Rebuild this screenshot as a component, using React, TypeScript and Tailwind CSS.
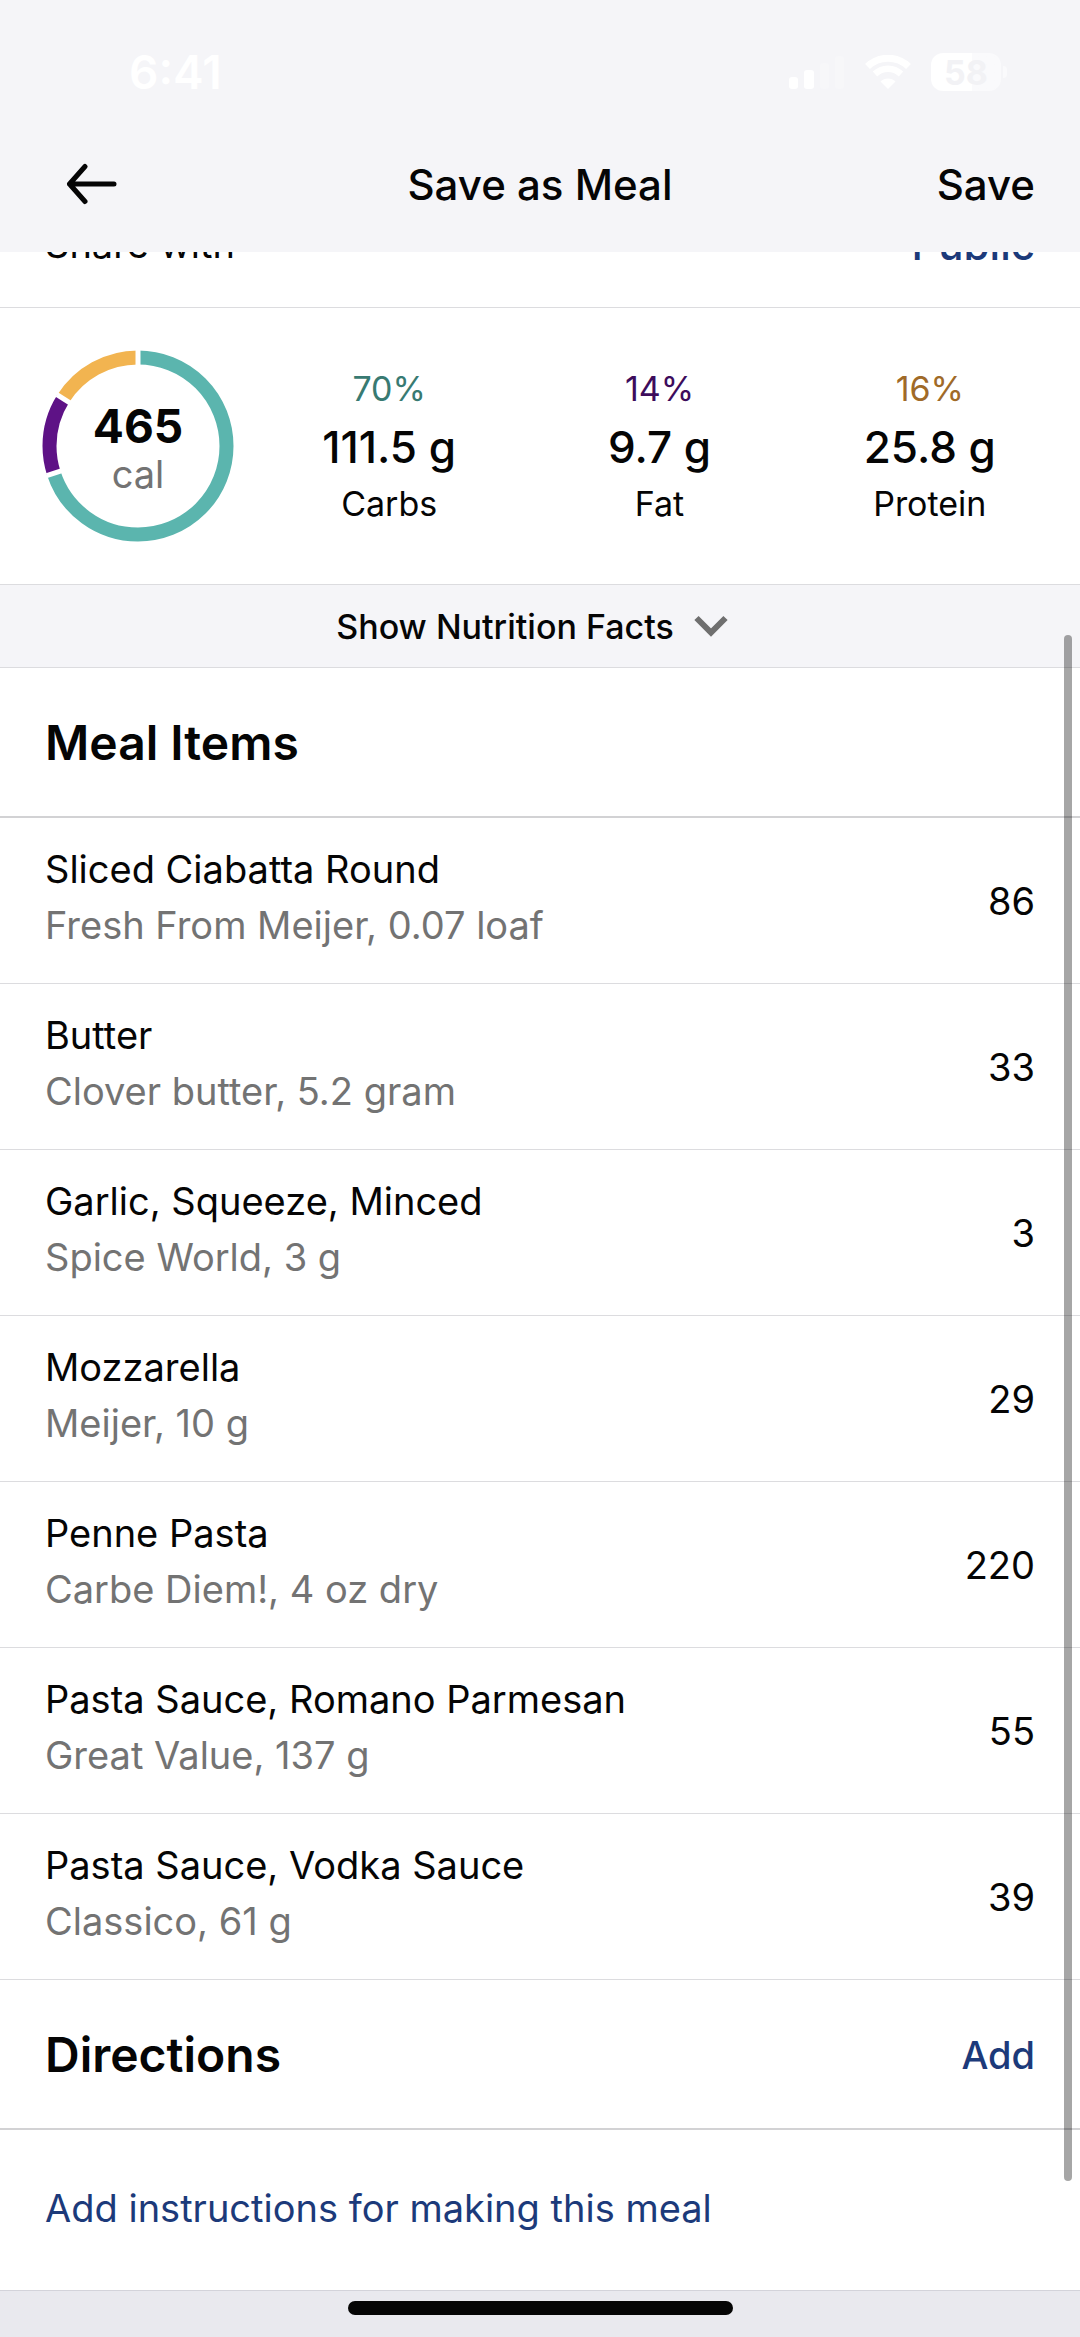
import React from "react";

type Macro = { percent: string; grams: string; label: string; color: string };
type MealItem = { name: string; detail: string; calories: number };

const macros: Macro[] = [
  { percent: "70%", grams: "111.5 g", label: "Carbs", color: "text-[#387a72]" },
  { percent: "14%", grams: "9.7 g", label: "Fat", color: "text-[#3d0c5c]" },
  { percent: "16%", grams: "25.8 g", label: "Protein", color: "text-[#a06a28]" },
];

const items: MealItem[] = [
  { name: "Sliced Ciabatta Round", detail: "Fresh From Meijer, 0.07 loaf", calories: 86 },
  { name: "Butter", detail: "Clover butter, 5.2 gram", calories: 33 },
  { name: "Garlic, Squeeze, Minced", detail: "Spice World, 3 g", calories: 3 },
  { name: "Mozzarella", detail: "Meijer, 10 g", calories: 29 },
  { name: "Penne Pasta", detail: "Carbe Diem!, 4 oz dry", calories: 220 },
  { name: "Pasta Sauce, Romano Parmesan", detail: "Great Value, 137 g", calories: 55 },
  { name: "Pasta Sauce, Vodka Sauce", detail: "Classico, 61 g", calories: 39 },
];

function StatusBar() {
  return (
    <div className="flex h-[116px] items-center justify-between pt-7 pr-[73px] pl-[129px] text-white">
      <span className="text-[46px] font-semibold">6:41</span>
      <div className="flex items-center gap-5">
        <svg width="56" height="34" viewBox="0 0 56 34" fill="currentColor" aria-hidden="true">
          <rect x="0" y="22" width="9" height="12" rx="3" />
          <rect x="15" y="15" width="10" height="19" rx="3" />
          <rect x="31" y="8" width="9" height="26" rx="3" opacity="0.2" />
          <rect x="46" y="1" width="9" height="33" rx="3" opacity="0.2" />
        </svg>
        <svg width="46" height="34" viewBox="0 0 46 34" fill="none" stroke="currentColor" aria-hidden="true">
          <path d="M2.5 11.5C14 0.5 32 0.5 43.5 11.5" strokeWidth="7" />
          <path d="M10 19C17.500 12 28.500 12 36 19" strokeWidth="6.500" />
          <path d="M15.500 26.500C19.500 22.500 26.500 22.500 30.500 26.500L23 34Z" fill="currentColor" stroke="none" />
        </svg>
        <div className="flex items-center gap-0.5">
          <div className="flex h-[38px] w-[70px] items-center justify-center rounded-xl bg-linear-to-r from-white from-58% to-[#fafafc] to-58% text-[34px] font-bold text-[#f2f2f5]">
            58
          </div>
          <div className="h-3 w-1 rounded-r-full bg-[#fafafc]" />
        </div>
      </div>
    </div>
  );
}

function CalorieRing() {
  return (
    <div className="relative flex size-[192px] shrink-0 flex-col items-center justify-center pt-2">
      <svg className="absolute inset-0" viewBox="0 0 192 192" fill="none" strokeWidth="14" aria-hidden="true">
        <g transform="rotate(-90 96 96)">
          <circle cx="96" cy="96" r="88.500" pathLength="100" stroke="#5bb5ae" strokeDasharray="70 30" />
          <circle cx="96" cy="96" r="88.500" pathLength="100" stroke="#5e1286" strokeDasharray="14 86" strokeDashoffset="-70" />
          <circle cx="96" cy="96" r="88.500" pathLength="100" stroke="#f2b450" strokeDasharray="16 84" strokeDashoffset="-84" />
        </g>
        <g stroke="#fff" strokeWidth="5">
          <path d="M96 0V20" />
          <path d="M96 0V20" transform="rotate(252 96 96)" />
          <path d="M96 0V20" transform="rotate(302.400 96 96)" />
        </g>
      </svg>
      <span className="text-[46px] leading-[48px] font-bold">465</span>
      <span className="text-[38px] leading-[48px] text-[#737373]">cal</span>
    </div>
  );
}

export default function App() {
  return (
    <div className="flex min-h-screen flex-col bg-white font-['Inter',sans-serif] text-[#050505]">
      <header className="bg-[#f5f5f8]">
        <StatusBar />
        <nav className="grid h-[136px] grid-cols-[1fr_auto_1fr] items-center px-[45px] text-[42px] font-medium">
          <button type="button" aria-label="Back" className="justify-self-start pl-5">
            <svg
              width="52"
              height="42"
              viewBox="0 0 52 42"
              fill="none"
              stroke="currentColor"
              strokeWidth="5"
              strokeLinecap="round"
              strokeLinejoin="round"
              aria-hidden="true"
            >
              <path d="M20 3.500L4.500 21L20 38.500M4.500 21H49" />
            </svg>
          </button>
          <h1>Save as Meal</h1>
          <button type="button" className="justify-self-end">
            Save
          </button>
        </nav>
      </header>

      <main className="relative flex grow flex-col overflow-hidden">
        <div className="-mt-[71px] flex h-[127px] shrink-0 items-center justify-between border-b border-[#dcdcdf] px-[45px] text-[38px]">
          <span>Share with</span>
          <button type="button" className="text-[42px] font-medium text-[#1c3a7a]">
            Public
          </button>
        </div>

        <section className="flex h-[277px] items-center border-b border-[#dcdcdf] pr-[15px] pl-[42px]">
          <CalorieRing />
          <div className="ml-5 flex grow">
            {macros.map((m) => (
              <div key={m.label} className="flex flex-1 flex-col items-center">
                <span className={`text-[34px] leading-[44px] ${m.color}`}>{m.percent}</span>
                <span className="text-[44px] leading-[72px] font-medium">{m.grams}</span>
                <span className="text-[34px] leading-[42px]">{m.label}</span>
              </div>
            ))}
          </div>
        </section>

        <button
          type="button"
          className="flex h-[83px] items-center justify-center border-b border-[#dcdcdf] bg-[#f5f5f8] text-[34px] font-medium"
        >
          Show Nutrition Facts
          <svg width="70" height="30" viewBox="0 0 70 30" fill="none" stroke="#6f6f6f" strokeWidth="6" aria-hidden="true">
            <path d="M22.500 7L37 21.500L51.500 7" />
          </svg>
        </button>

        <section>
          <h2 className="flex h-[150px] items-center border-b-2 border-[#d2d2d4] px-[45px] pt-0.5 text-[48px] font-semibold">
            Meal Items
          </h2>
          <ul>
            {items.map((item) => (
              <li
                key={item.name}
                className="flex h-[166px] items-center justify-between border-b border-[#dcdcdf] px-[45px] text-[38px]"
              >
                <div className="pb-2 leading-[56px]">
                  <p>{item.name}</p>
                  <p className="text-[#737373]">{item.detail}</p>
                </div>
                <span className="pt-0.5">{item.calories}</span>
              </li>
            ))}
          </ul>
        </section>

        <section>
          <div className="flex h-[150px] items-center justify-between border-b-2 border-[#d2d2d4] px-[45px] pt-0.5">
            <h2 className="text-[48px] font-semibold">Directions</h2>
            <button type="button" className="text-[38px] font-medium text-[#1c3a7a]">
              Add
            </button>
          </div>
          <div className="flex h-[160px] items-center px-[45px] pb-1">
            <button type="button" className="text-[38px] text-[#1c3a7a]">
              Add instructions for making this meal
            </button>
          </div>
        </section>

        <div className="absolute top-[383px] right-2 bottom-[109px] w-2 rounded-full bg-black/35" aria-hidden="true" />
      </main>

      <footer className="flex h-[47px] justify-center border-t border-[#d3d3da] bg-[#e9e9ee] pt-2.5">
        <div className="h-3.5 w-[385px] rounded-full bg-[#050505]" />
      </footer>
    </div>
  );
}
